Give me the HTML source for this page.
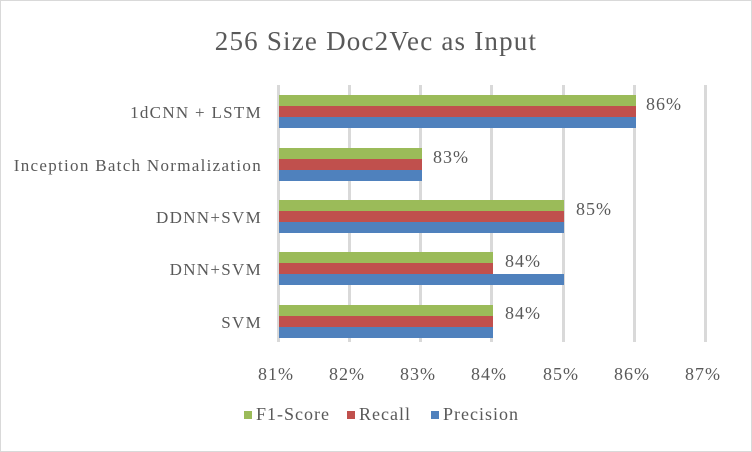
<!DOCTYPE html><html><head><style>
body{margin:0;width:752px;height:452px;background:#fff;font-family:"Liberation Serif",serif;color:#595959;overflow:hidden}
.f{position:absolute;left:0;top:0;width:750px;height:450px;border:1px solid #d9d9d9}
.a{position:absolute;white-space:nowrap;letter-spacing:1px}
.g{position:absolute;top:85px;height:257px;width:3px;background:#d9d9d9}
.b{position:absolute;left:279px;height:11px}
.l{font-size:17px;letter-spacing:1.3px}
.v{font-size:18px}
</style></head><body><div class="f"></div>
<div class="a" style="left:0;width:752px;text-align:center;top:26px;font-size:27px;letter-spacing:1.2px">256 Size Doc2Vec as Input</div>
<div class="g" style="left:277px"></div><div class="g" style="left:348px"></div><div class="g" style="left:419px"></div><div class="g" style="left:490px"></div><div class="g" style="left:562px"></div><div class="g" style="left:633px"></div><div class="g" style="left:704px"></div>
<div id="bars"></div>
<script>
var d=[[95,86,86,86],[148,83,83,83],[200,85,85,85],[252,84,84,85],[305,84,84,84]];var c=['#9bbb59','#c0504d','#4f81bd'];var h='';
d.forEach(function(r){for(var i=0;i<3;i++){var w=(r[i+1]-81)*71.3;h+='<div class="b" style="top:'+(r[0]+i*11)+'px;width:'+w+'px;background:'+c[i]+'"></div>';}});
document.getElementById('bars').innerHTML=h;
</script>
<div class="a v" style="left:646px;top:94px">86%</div>
<div class="a v" style="left:433px;top:147px">83%</div>
<div class="a v" style="left:576px;top:199px">85%</div>
<div class="a v" style="left:505px;top:251px">84%</div>
<div class="a v" style="left:505px;top:303px">84%</div>
<div class="a l" style="right:490px;top:103px">1dCNN + LSTM</div>
<div class="a l" style="right:490px;top:156px">Inception Batch Normalization</div>
<div class="a l" style="right:490px;top:208px">DDNN+SVM</div>
<div class="a l" style="right:490px;top:260px">DNN+SVM</div>
<div class="a l" style="right:490px;top:313px">SVM</div>
<div class="a v" style="left:258px;top:364px">81%</div>
<div class="a v" style="left:329px;top:364px">82%</div>
<div class="a v" style="left:400px;top:364px">83%</div>
<div class="a v" style="left:471px;top:364px">84%</div>
<div class="a v" style="left:543px;top:364px">85%</div>
<div class="a v" style="left:614px;top:364px">86%</div>
<div class="a v" style="left:685px;top:364px">87%</div>
<div class="a" style="left:244px;top:411px;width:8px;height:8px;background:#9bbb59"></div>
<div class="a v" style="left:256px;top:404px">F1-Score</div>
<div class="a" style="left:347px;top:411px;width:8px;height:8px;background:#c0504d"></div>
<div class="a v" style="left:359px;top:404px">Recall</div>
<div class="a" style="left:431px;top:411px;width:8px;height:8px;background:#4f81bd"></div>
<div class="a v" style="left:443px;top:404px">Precision</div>
</body></html>
